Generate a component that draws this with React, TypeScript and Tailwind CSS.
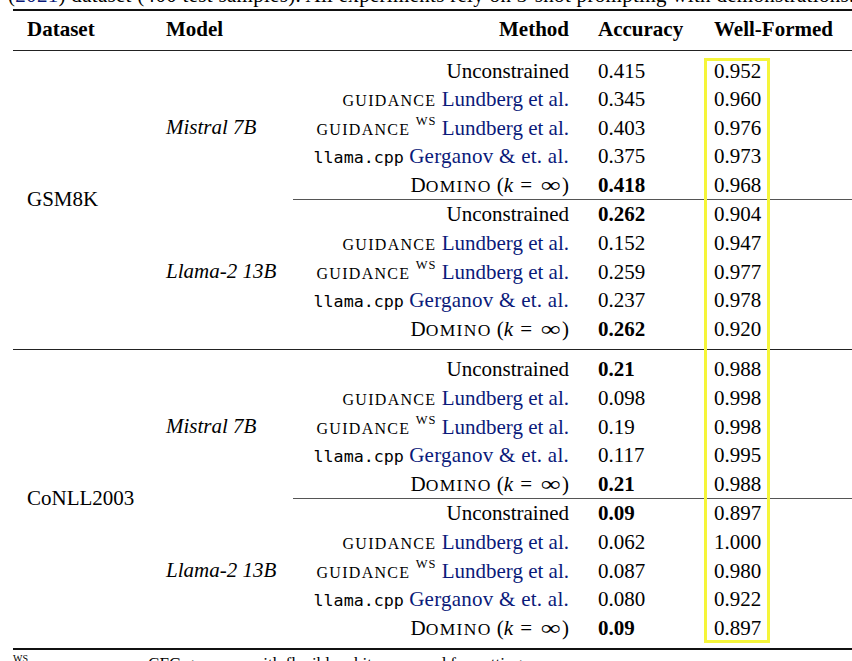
import React from "react";

type RowData = { method: React.ReactNode; acc: string; bold?: boolean; wf: string };
type Group = { model: string; rows: RowData[] };

function Cite({ children }: { children: React.ReactNode }) {
  return <span className="text-[#0a1a7a]">{children}</span>;
}

function Guidance() {
  return <span className="text-[16px] leading-none tracking-[1.3px]">GUIDANCE</span>;
}

function Ws() {
  return <span className="inline-block align-[10px] text-[12.5px] leading-none tracking-[1px]">WS</span>;
}

function Mono({ children }: { children: React.ReactNode }) {
  return (
    <span className="font-['DejaVu_Sans_Mono',monospace] text-[16.7px] leading-none">{children}</span>
  );
}

function Domino() {
  return (
    <>
      D<span className="text-[17.5px] leading-none tracking-[1.3px]">OMINO</span> (
      <span className="italic">k</span>
      <span className="mx-[7px]">=</span>
      <span className="inline-block mx-[4px] scale-x-[1.35]">∞</span>)
    </>
  );
}

const unc = <>Unconstrained</>;
const g = (
  <>
    <Guidance /> <Cite>Lundberg et al.</Cite>
  </>
);
const gws = (
  <>
    <Guidance /> <Ws /> <Cite>Lundberg et al.</Cite>
  </>
);
const llama = (
  <>
    <Mono>llama.cpp</Mono> <Cite><span className="tracking-[0.25px]">Gerganov &amp; et. al.</span></Cite>
  </>
);
const dom = <Domino />;

const gsm: Group[] = [
  {
    model: "Mistral 7B",
    rows: [
      { method: unc, acc: "0.415", wf: "0.952" },
      { method: g, acc: "0.345", wf: "0.960" },
      { method: gws, acc: "0.403", wf: "0.976" },
      { method: llama, acc: "0.375", wf: "0.973" },
      { method: dom, acc: "0.418", bold: true, wf: "0.968" },
    ],
  },
  {
    model: "Llama-2 13B",
    rows: [
      { method: unc, acc: "0.262", bold: true, wf: "0.904" },
      { method: g, acc: "0.152", wf: "0.947" },
      { method: gws, acc: "0.259", wf: "0.977" },
      { method: llama, acc: "0.237", wf: "0.978" },
      { method: dom, acc: "0.262", bold: true, wf: "0.920" },
    ],
  },
];

const conll: Group[] = [
  {
    model: "Mistral 7B",
    rows: [
      { method: unc, acc: "0.21", bold: true, wf: "0.988" },
      { method: g, acc: "0.098", wf: "0.998" },
      { method: gws, acc: "0.19", wf: "0.998" },
      { method: llama, acc: "0.117", wf: "0.995" },
      { method: dom, acc: "0.21", bold: true, wf: "0.988" },
    ],
  },
  {
    model: "Llama-2 13B",
    rows: [
      { method: unc, acc: "0.09", bold: true, wf: "0.897" },
      { method: g, acc: "0.062", wf: "1.000" },
      { method: gws, acc: "0.087", wf: "0.980" },
      { method: llama, acc: "0.080", wf: "0.922" },
      { method: dom, acc: "0.09", bold: true, wf: "0.897" },
    ],
  },
];

function Block({ dataset, groups }: { dataset: string; groups: Group[] }) {
  return (
    <div className="flex py-[5.5px]">
      <div className="w-[139px] shrink-0 pl-[14px] flex items-center">{dataset}</div>
      <div className="flex-1 flex flex-col">
        {groups.map((grp, i) => (
          <div key={i} className="flex">
            <div className="w-[141px] shrink-0 pl-[14px] flex items-center italic">{grp.model}</div>
            <div className={"flex-1 flex flex-col" + (i > 0 ? " border-t border-[#555]" : "")}>
              {grp.rows.map((r, j) => (
                <div key={j} className="flex h-[28.6px] leading-[28.6px]">
                  <div className="w-[290px] shrink-0 pr-[14px] text-right whitespace-nowrap">{r.method}</div>
                  <div className={"w-[117px] shrink-0 pl-[15px]" + (r.bold ? " font-bold" : "")}>{r.acc}</div>
                  <div className="flex-1 pl-[14px]">{r.wf}</div>
                </div>
              ))}
            </div>
          </div>
        ))}
      </div>
    </div>
  );
}

export default function App() {
  return (
    <div className="relative w-[852px] h-[661px] overflow-hidden bg-white text-black font-['Liberation_Serif',serif] text-[21px]">
      <div className="h-[9px] overflow-hidden pl-[8px]">
        <div className="-mt-[15px] leading-[21px] whitespace-nowrap tracking-[0.3px]">
          (<span className="text-[#0a1a7a]">2021</span>) dataset (400 test samples). All experiments rely on 3-shot
          prompting with demonstrations.
        </div>
      </div>
      <div className="ml-[13px]">
        <div className="h-[2px] bg-[#111]" />
        <div className="flex h-[39px] items-center pb-[2px] font-bold">
          <div className="w-[139px] shrink-0 pl-[14px]">Dataset</div>
          <div className="w-[141px] shrink-0 pl-[14px]">Model</div>
          <div className="w-[290px] shrink-0 pr-[14px] text-right">Method</div>
          <div className="w-[117px] shrink-0 pl-[15px]">Accuracy</div>
          <div className="flex-1 pl-[14px]">Well-Formed</div>
        </div>
        <div className="h-px bg-[#222]" />
        <Block dataset="GSM8K" groups={gsm} />
        <div className="h-px bg-[#222]" />
        <Block dataset="CoNLL2003" groups={conll} />
        <div className="h-[2px] bg-[#111]" />
      </div>
      <div className="mt-[4.5px] pl-[13px] text-[17px] leading-[20px] whitespace-nowrap">
        <span className="inline-block align-[7px] text-[10px] leading-none">WS</span>{" "}
        <span className="text-[12.5px] tracking-[1.6px]">GUIDANCE</span> uses CFG grammar with flexible whitespace and
        formatting.
      </div>
      <div className="absolute left-[704px] top-[58px] w-[66px] h-[585px] border-[3px] border-[#f5f53a]" />
    </div>
  );
}
